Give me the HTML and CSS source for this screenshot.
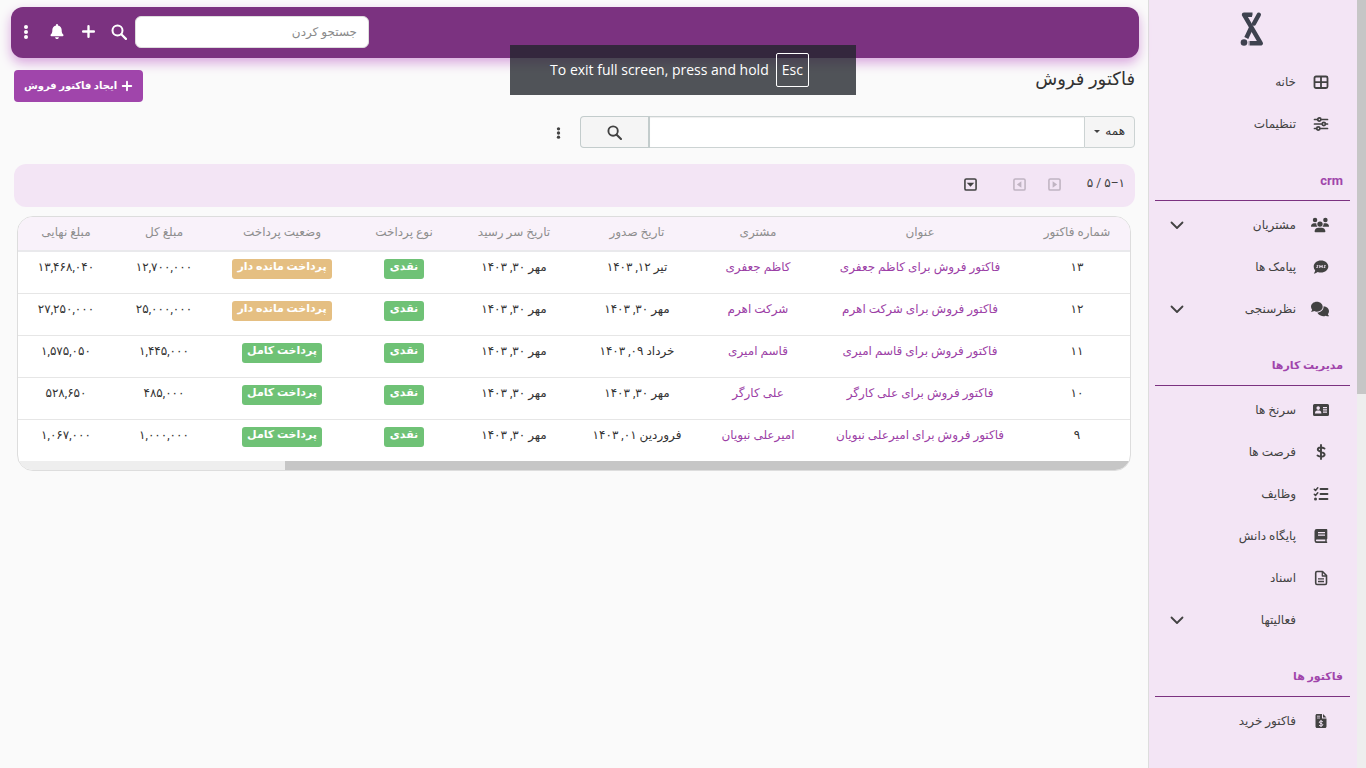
FILE: index.html
```html
<!DOCTYPE html>
<html lang="fa" dir="rtl">
<head>
<meta charset="utf-8">
<title>فاکتور فروش</title>
<link rel="stylesheet" href="styles.css">
</head>
<body>
<svg class="sprite" aria-hidden="true">
  <symbol id="i-search" viewBox="0 0 16 16"><circle cx="6.5" cy="6.5" r="5" fill="none" stroke="currentColor" stroke-width="2"/><path d="M10.3 10.3l4.6 4.600" stroke="currentColor" stroke-width="2.200" stroke-linecap="round"/></symbol>
  <symbol id="i-plus" viewBox="0 0 14 14"><path d="M7 2v10M2 7h10" stroke="currentColor" stroke-width="2.200" stroke-linecap="round"/></symbol>
  <symbol id="i-dots" viewBox="0 0 6 14"><circle cx="3" cy="2" r="2"/><circle cx="3" cy="7" r="2"/><circle cx="3" cy="12" r="2"/></symbol>
  <symbol id="i-down" viewBox="0 0 14 14"><path d="M1.500 4.500l5.500 5.500 5.500-5.500" fill="none" stroke="currentColor" stroke-width="1.800" stroke-linecap="round" stroke-linejoin="round"/></symbol>
  <symbol id="i-bell" viewBox="0 0 448 512"><path d="M224 0c-18 0-32 14-32 32v19C119 66 64 131 64 208v19c0 47-17 92-48 127l-8 9c-8 9-10 22-5 33s16 19 29 19h384c13 0 24-7 29-19s3-24-5-33l-8-9c-31-35-48-80-48-127v-19c0-77-55-142-128-157V32c0-18-14-32-32-32zm45 493c12-12 19-28 19-45H160c0 17 7 33 19 45s28 19 45 19 33-7 45-19z"/></symbol>
</svg>

<div class="page">
  <div class="page-scroll"><div class="page-thumb"></div></div>

  <aside class="sidebar">
    <a class="logo" href="#" aria-label="صفحه اصلی">
      <svg viewBox="0 0 24 36" width="24" height="36"><g fill="none" stroke="currentColor" stroke-width="4.400" stroke-linejoin="round"><path d="M12.500 3.700H4L20.800 32.300H8.500"/><path d="M18.800 3.700L14 12.500" stroke-linecap="round"/><path d="M11.500 16L6.300 27"/></g><path d="M15 1l-4.500 8" stroke="#f3e5f5" stroke-width="1"/><path d="M3 26.500l6 3v6" fill="none" stroke="#f3e5f5" stroke-width="1"/><circle cx="4" cy="31.500" r="3.300"/></svg>
    </a>
    <nav>
      <a class="item" href="#"><svg class="ic" viewBox="0 0 16 16"><rect x="1.500" y="2.500" width="13" height="11.500" rx="1.500" fill="none" stroke="currentColor" stroke-width="1.800"/><path d="M8 2.500V14M1.500 8.200h13" stroke="currentColor" stroke-width="1.800"/></svg><span>خانه</span></a>
      <a class="item" href="#"><svg class="ic" viewBox="0 0 16 16"><g fill="none" stroke="currentColor" stroke-width="1.700" stroke-linecap="round"><path d="M1.500 3.500h3M8.500 3.500h6M1.500 8h7M13 8h1.500M1.500 12.500h2M7.500 12.500h7"/><circle cx="6.300" cy="3.500" r="1.600"/><circle cx="10.800" cy="8" r="1.600"/><circle cx="5.300" cy="12.500" r="1.600"/></g></svg><span>تنظیمات</span></a>

      <h2 class="group">crm</h2>
      <a class="item" href="#"><svg class="ic wide" viewBox="0 0 640 512"><path d="M144 0a80 80 0 1 1 0 160 80 80 0 1 1 0-160zm368 0a80 80 0 1 1 0 160 80 80 0 1 1 0-160zM0 299c0-59 48-107 107-107h43c16 0 31 4 44 10-1 7-2 14-2 22 0 38 17 72 43 96H21c-12 0-21-10-21-21zm405 21c26-24 43-58 43-96 0-8-1-15-2-22 14-6 29-10 44-10h43c59 0 107 48 107 107 0 12-10 21-21 21zM224 224a96 96 0 1 1 192 0 96 96 0 1 1-192 0zm-96 261c0-73 60-133 133-133h118c73 0 133 60 133 133 0 15-12 27-27 27H155c-15 0-27-12-27-27z"/></svg><span>مشتریان</span><svg class="chev"><use href="#i-down"/></svg></a>
      <a class="item" href="#"><svg class="ic" viewBox="0 0 16 16"><path d="M8 1.500c4.200 0 7.300 2.700 7.300 6s-3.100 6-7.300 6c-1.200 0-2.300-.2-3.300-.6-1 .8-2.300 1.500-3.900 1.500.8-.9 1.300-1.900 1.400-2.900C1.200 10.400.7 9 .7 7.500c0-3.300 3.100-6 7.300-6z"/><path d="M5.300 6.500c-1.500-.5-1.900.7-.9 1s.6 1.500-1 1M6.800 9V6.400l1.200 1.500 1.200-1.500V9M12.600 6.500c-1.500-.5-1.900.7-.9 1s.6 1.500-1 1" fill="none" stroke="#f3e5f5" stroke-width="1"/></svg><span>پیامک ها</span></a>
      <a class="item" href="#"><svg class="ic wide" viewBox="0 0 640 512"><path d="M208 352c115 0 208-79 208-176S323 0 208 0 0 79 0 176c0 39 15 74 40 103-3 19-13 38-31 56-10 8-11 17 7 17 38 0 76-15 100-29 28 18 59 29 92 29zm240-176c0 112-101 198-221 208 24 73 109 128 205 128 33 0 65-7 92-19 24 12 62 19 100 19 16 0 22-9 10-20-15-13-29-34-34-53 25-29 40-64 40-103 0-92-86-168-192-176z"/></svg><span>نظرسنجی</span><svg class="chev"><use href="#i-down"/></svg></a>

      <h2 class="group">مدیریت کارها</h2>
      <a class="item" href="#"><svg class="ic" viewBox="0 0 16 16"><path fill-rule="evenodd" d="M1.500 2h13A1.500 1.500 0 0 1 16 3.500v9a1.500 1.500 0 0 1-1.500 1.500h-13A1.500 1.500 0 0 1 0 12.500v-9A1.500 1.500 0 0 1 1.500 2zM5.200 4.300a1.800 1.800 0 1 0 0 3.600 1.800 1.800 0 0 0 0-3.600zM2 11.500h6.400C8.400 9.500 7.400 8.600 6.200 8.600h-2C3 8.600 2 9.500 2 11.500zM10 5v1.200h4V5zm0 2.300v1.200h4V7.300zm0 2.300v1.200h4V9.600z"/></svg><span>سرنخ ها</span></a>
      <a class="item" href="#"><svg class="ic" viewBox="0 0 16 16"><path d="M8 1v14M11.500 4.500C9 3 4.800 3 4.800 5.500S11.600 7.600 11.600 10.500c0 2.500-4.500 2.700-7.100 1" fill="none" stroke="currentColor" stroke-width="1.900" stroke-linecap="round"/></svg><span>فرصت ها</span></a>
      <a class="item" href="#"><svg class="ic" viewBox="0 0 16 16"><g fill="none" stroke="currentColor" stroke-width="1.800" stroke-linecap="round" stroke-linejoin="round"><path d="M7.500 3h7M7.500 8h7M6.500 13h8"/><path d="M1.300 3.200l1.200 1.200 2.300-2.700M1.300 8.200l1.200 1.200 2.300-2.700" stroke-width="1.500"/></g><circle cx="2.500" cy="13" r="1.500"/></svg><span>وظایف</span></a>
      <a class="item" href="#"><svg class="ic" viewBox="0 0 16 16"><path fill-rule="evenodd" d="M3.700 1h9.600c.6 0 1 .4 1 1v8.500c0 .4-.3.800-.6.900v2c.9.200.7 1.600-.2 1.600H3.700A2.300 2.300 0 0 1 1.500 12.700V3.300A2.300 2.300 0 0 1 3.700 1zM5 4v1.200h7V4zm0 2.500v1.200h7V6.500zM3.800 11.500c-1.200 0-1.200 1.800 0 1.800h8.500v-1.800z"/></svg><span>پایگاه دانش</span></a>
      <a class="item" href="#"><svg class="ic" viewBox="0 0 16 16"><g fill="none" stroke="currentColor" stroke-width="1.600" stroke-linejoin="round"><path d="M4 1.500h5.500l4 4V13c0 .8-.5 1.500-1.300 1.500H4c-.8 0-1.300-.7-1.300-1.500V3c0-.8.500-1.500 1.300-1.500z"/><path d="M9.300 2v4h4M5 8.800h6M5 11.500h6" stroke-width="1.300"/></g></svg><span>اسناد</span></a>
      <a class="item" href="#"><svg class="ic" viewBox="0 0 16 16"></svg><span>فعالیتها</span><svg class="chev"><use href="#i-down"/></svg></a>

      <h2 class="group">فاکتور ها</h2>
      <a class="item" href="#"><svg class="ic" viewBox="0 0 16 16"><path d="M4 1h5v4.500h4.500V13.500c0 .8-.7 1.500-1.500 1.500H4c-.8 0-1.500-.7-1.500-1.500v-11C2.500 1.700 3.200 1 4 1zm6 0l3.500 3.500H10z"/><path d="M4 3.200h3M4 5h3" stroke="#f3e5f5" stroke-width=".8"/><path d="M8 7v7M9.800 8.700C8.500 8 6.300 8 6.300 9.300s3.500 1 3.500 2.400-2.300 1.400-3.700.6" fill="none" stroke="#f3e5f5" stroke-width="1"/></svg><span>فاکتور خرید</span></a>
    </nav>
  </aside>

  <div class="main">
    <header class="topbar">
      <input class="top-search" type="search" placeholder="جستجو کردن" aria-label="جستجو کردن">
      <button class="top-btn" type="button" aria-label="جستجو"><svg width="16" height="16"><use href="#i-search"/></svg></button>
      <button class="top-btn" type="button" aria-label="افزودن"><svg width="15" height="15"><use href="#i-plus"/></svg></button>
      <button class="top-btn" type="button" aria-label="اعلان ها"><svg width="14" height="15"><use href="#i-bell"/></svg></button>
      <button class="top-btn" type="button" aria-label="بیشتر"><svg width="6" height="14"><use href="#i-dots"/></svg></button>
    </header>

    <main class="content">
      <div class="title-row">
        <h1>فاکتور فروش</h1>
        <button class="create" type="button"><svg width="12" height="12"><use href="#i-plus"/></svg>ایجاد فاکتور فروش</button>
      </div>

      <form class="filter">
        <span class="scope"><select aria-label="فیلتر"><option>همه</option></select></span>
        <input class="query" type="text" aria-label="متن جستجو">
        <button class="go" type="button" aria-label="جستجو"><svg width="15" height="15"><use href="#i-search"/></svg></button>
        <button class="more" type="button" aria-label="بیشتر"><svg width="5" height="12"><use href="#i-dots"/></svg></button>
      </form>

      <div class="pager">
        <span class="range">۱–۵ / ۵</span>
        <button type="button" disabled aria-label="قبلی"><svg viewBox="0 0 14 14"><rect x="1" y="1" width="12" height="12" rx="1.500" fill="none" stroke="currentColor" stroke-width="1.700"/><path d="M5 3.500v7L9.800 7z"/></svg></button>
        <button type="button" disabled aria-label="بعدی"><svg viewBox="0 0 14 14"><rect x="1" y="1" width="12" height="12" rx="1.500" fill="none" stroke="currentColor" stroke-width="1.700"/><path d="M9 3.500v7L4.200 7z"/></svg></button>
        <button class="last" type="button" aria-label="گزینه ها"><svg viewBox="0 0 14 14"><rect x="1" y="1" width="12" height="12" rx="1.500" fill="none" stroke="currentColor" stroke-width="1.700"/><path d="M3 5h8L7 9.500z"/></svg></button>
      </div>

      <div class="card">
        <table>
          <colgroup><col class="c1"><col class="c2"><col class="c3"><col class="c4"><col class="c5"><col class="c6"><col class="c7"><col class="c8"><col class="c9"></colgroup>
          <thead><tr><th>شماره فاکتور</th><th>عنوان</th><th>مشتری</th><th>تاریخ صدور</th><th>تاریخ سر رسید</th><th>نوع پرداخت</th><th>وضعیت پرداخت</th><th>مبلغ کل</th><th>مبلغ نهایی</th></tr></thead>
          <tbody>
            <tr><td>۱۳</td><td><a href="#">فاکتور فروش برای کاظم جعفری</a></td><td><a href="#">کاظم جعفری</a></td><td>تیر ۱۲, ۱۴۰۳</td><td>مهر ۳۰, ۱۴۰۳</td><td><span class="tag">نقدی</span></td><td><span class="tag due">پرداخت مانده دار</span></td><td>۱۲,۷۰۰,۰۰۰</td><td>۱۳,۴۶۸,۰۴۰</td></tr>
            <tr><td>۱۲</td><td><a href="#">فاکتور فروش برای شرکت اهرم</a></td><td><a href="#">شرکت اهرم</a></td><td>مهر ۳۰, ۱۴۰۳</td><td>مهر ۳۰, ۱۴۰۳</td><td><span class="tag">نقدی</span></td><td><span class="tag due">پرداخت مانده دار</span></td><td>۲۵,۰۰۰,۰۰۰</td><td>۲۷,۲۵۰,۰۰۰</td></tr>
            <tr><td>۱۱</td><td><a href="#">فاکتور فروش برای قاسم امیری</a></td><td><a href="#">قاسم امیری</a></td><td>خرداد ۰۹, ۱۴۰۳</td><td>مهر ۳۰, ۱۴۰۳</td><td><span class="tag">نقدی</span></td><td><span class="tag">پرداخت کامل</span></td><td>۱,۴۴۵,۰۰۰</td><td>۱,۵۷۵,۰۵۰</td></tr>
            <tr><td>۱۰</td><td><a href="#">فاکتور فروش برای علی کارگر</a></td><td><a href="#">علی کارگر</a></td><td>مهر ۳۰, ۱۴۰۳</td><td>مهر ۳۰, ۱۴۰۳</td><td><span class="tag">نقدی</span></td><td><span class="tag">پرداخت کامل</span></td><td>۴۸۵,۰۰۰</td><td>۵۲۸,۶۵۰</td></tr>
            <tr><td>۹</td><td><a href="#">فاکتور فروش برای امیرعلی نبویان</a></td><td><a href="#">امیرعلی نبویان</a></td><td>فروردین ۰۱, ۱۴۰۳</td><td>مهر ۳۰, ۱۴۰۳</td><td><span class="tag">نقدی</span></td><td><span class="tag">پرداخت کامل</span></td><td>۱,۰۰۰,۰۰۰</td><td>۱,۰۶۷,۰۰۰</td></tr>
          </tbody>
        </table>
        <div class="table-scroll"><div class="table-thumb"></div></div>
      </div>
    </main>
  </div>
</div>

<div class="notice" dir="ltr">To exit full screen, press and hold <kbd>Esc</kbd></div>
</body>
</html>
```
FILE: styles.css
```css
* { box-sizing: border-box; }
body {
  margin: 0;
  background: #fafafa;
  color: #333;
  font: 12px/20px Roboto, "DejaVu Sans", sans-serif;
}
a { color: inherit; text-decoration: none; }
button, input, select { font: inherit; color: inherit; margin: 0; }
button { border: 0; padding: 0; background: none; display: flex; align-items: center; justify-content: center; }
svg { fill: currentColor; flex: none; }
.sprite { position: absolute; width: 0; height: 0; }

.page { display: flex; height: 100vh; overflow: hidden; }
.page-scroll { flex: none; width: 9px; background: #eee; }
.page-thumb { height: 394px; background: #c6c6c6; }

.sidebar {
  flex: none;
  width: 209px;
  background: #f3e5f5;
  border-left: 1px solid #ddd;
  color: #424242;
}
.logo { display: flex; justify-content: center; height: 61px; padding: 11px 2px 0 0; color: #3e424f; }
.item { display: flex; align-items: center; gap: 17px; height: 42px; padding: 0 28px 0 21px; }
.ic { width: 16px; height: 16px; }
.ic.wide { width: 18px; margin-left: -2px; }
.chev { width: 14px; height: 14px; margin-right: auto; }
.group {
  height: 56px;
  margin: 0 7px 3px 6px;
  padding: 26px 7px 0;
  border-bottom: 1px solid #7b3280;
  color: #a045ab;
  font-size: 11px;
  line-height: 20px;
}
.group:first-of-type { font-size: 13px; }

.main { flex: 1; min-width: 0; }
.topbar {
  display: flex;
  align-items: center;
  justify-content: flex-end;
  height: 51px;
  margin: 7px 9px 0 11px;
  padding: 0 0 2px 7px;
  border-radius: 12px;
  background: #7b3280;
  box-shadow: 0 5px 12px #d9a7de;
  color: #fff;
}
.top-search {
  width: 234px;
  height: 32px;
  margin-left: 8px;
  padding: 0 11px;
  border: 1px solid #ddd;
  border-radius: 6px;
  background: #fff;
  color: #333;
}
.top-search::placeholder { color: #8a8a8a; opacity: 1; }
.top-btn { width: 16px; height: 32px; }
.top-btn + .top-btn { margin-right: 15px; }

.content { padding: 12px 13px 0 14px; }
.title-row { display: flex; justify-content: space-between; height: 32px; }
h1 { margin: 0; font-size: 18px; line-height: 18px; font-weight: 400; }
.create {
  gap: 4px;
  width: 129px;
  height: 32px;
  border-radius: 4px;
  background: #a045ab;
  color: #fff;
  font-size: 10px;
  font-weight: 700;
  white-space: nowrap;
}

.filter { display: flex; height: 32px; margin-top: 14px; padding: 0; }
.scope {
  position: relative;
  width: 51px;
  border: 1px solid #ccd3d3;
  border-radius: 0 4px 4px 0;
  background: #f5f5f5;
}
.scope::after {
  content: "";
  position: absolute;
  left: 9px;
  top: 13px;
  border: 3px solid transparent;
  border-top-color: #424242;
  border-bottom: 0;
}
.scope select { width: 100%; height: 28px; padding: 0 9px; border: 0; background: none; appearance: none; font-size: 12px; }
.query { width: 434px; border: 1px solid #ccd3d3; border-width: 1px 0; background: #fff; box-shadow: inset 0 1px 1px #eee; }
.go { width: 70px; border: 1px solid #c3cccc; border-right-width: 2px; border-radius: 4px 0 0 4px; background: #f5f5f5; }
.go, .more { color: #424242; }
.more { width: 13px; height: 34px; margin-right: 15px; }

.pager {
  display: flex;
  align-items: center;
  height: 43px;
  margin-top: 16px;
  padding: 0 10px 2px 0;
  border-radius: 12px;
  background: #f3e5f5;
  color: #424242;
}
.range { width: 38px; margin: 0 0 4px 26px; white-space: nowrap; }
.pager button { width: 13px; margin-left: 22px; }
.pager svg { width: 13px; height: 13px; }
.pager button:disabled { color: #c0b4c2; }
.pager .last { margin-right: 14px; }

.card { margin: 9px 4px 0 3px; border: 1px solid #ddd; border-radius: 16px; background: #fff; overflow: hidden; }
table { width: 100%; border-collapse: collapse; table-layout: fixed; text-align: center; white-space: nowrap; }
.c1 { width: 106px; } .c2 { width: 208px; } .c3 { width: 116px; }
.c4 { width: 126px; } .c5 { width: 120px; } .c6 { width: 100px; }
.c7 { width: 144px; } .c8 { width: 92px; } .c9 { width: 100px; }
th { height: 34px; padding: 0 0 4px; background: #f9f2fa; border-bottom: 2px solid #e9e9ec; color: #8e8e8e; font-weight: 400; }
td { height: 42px; padding: 5px 0 0; vertical-align: top; border-bottom: 1px solid #e6e6e6; }
td:last-child, th:last-child { padding-right: 4px; }
tbody tr:last-child td { border-bottom: 0; }
td a { color: #9c3fa6; }
.tag {
  display: inline-block;
  height: 20px;
  padding: 0 5px;
  min-width: 40px;
  border-radius: 3px;
  background: #6fc276;
  color: #fff;
  font-size: 11px;
  line-height: 16px;
  font-weight: 700;
  vertical-align: top;
  margin-top: 2px;
}
.tag.due { background: #e5bf82; }
.table-scroll { height: 9px; background: #eee; }
.table-thumb { width: 76%; height: 9px; background: #c6c6c6; }

.notice {
  position: absolute;
  top: 45px;
  left: 50%;
  width: 346px;
  height: 50px;
  margin-left: -173px;
  display: flex;
  align-items: center;
  justify-content: center;
  gap: 7px;
  padding-right: 7px;
  background: rgba(32, 36, 42, .78);
  color: #fff;
  font: 14px/20px "Open Sans", sans-serif;
  white-space: nowrap;
}
kbd { height: 34px; padding: 0 5px; border: 1px solid #fff; border-radius: 2px; font: inherit; line-height: 32px; }
```
